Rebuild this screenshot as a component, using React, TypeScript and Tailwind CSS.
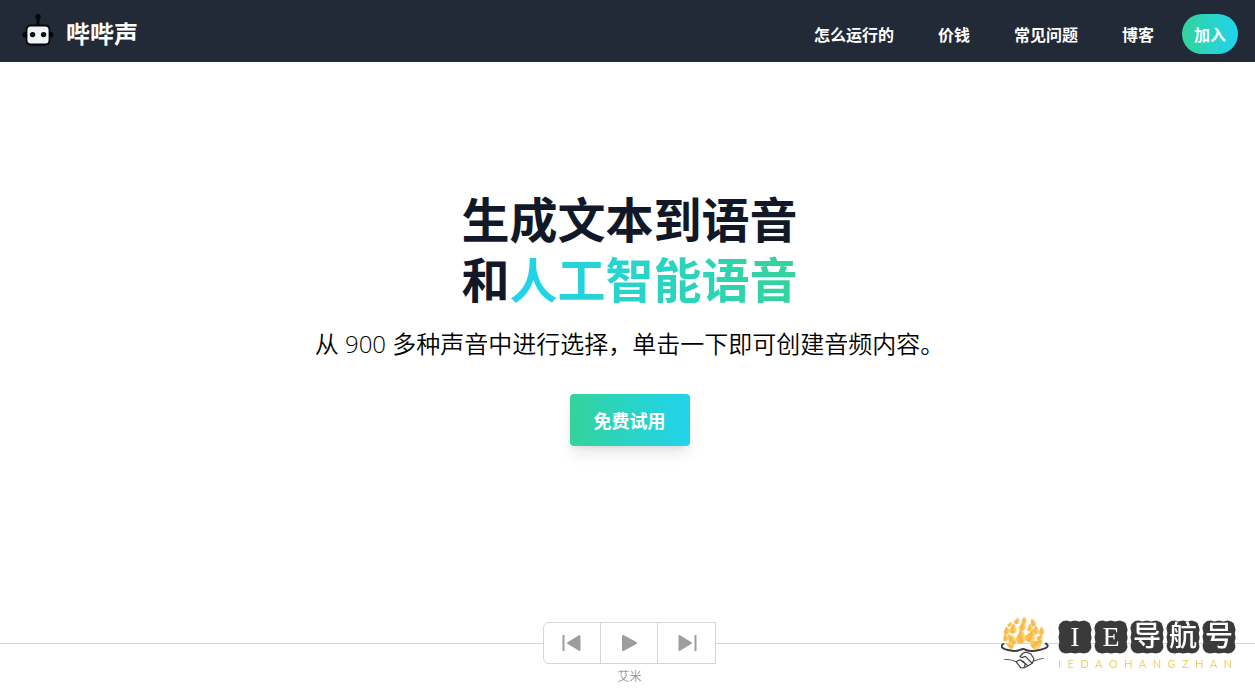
import React from "react";

const navLinks = [
  { label: "怎么运行的", href: "#how" },
  { label: "价钱", href: "#pricing" },
  { label: "常见问题", href: "#faq" },
  { label: "博客", href: "#blog" },
];

const RobotIcon: React.FC = () => (
  <svg className="h-10 w-8" viewBox="0 -1 32 40" aria-hidden="true">
    <circle cx="16" cy="1.8" r="2.8" fill="#05070d" />
    <path d="M16 2v10" stroke="#05070d" strokeWidth="2.8" />
    <rect x="0.5" y="17" width="31" height="5.5" rx="2.5" fill="#05070d" />
    <rect x="3.8" y="9.4" width="24.4" height="21.4" rx="5" fill="#05070d" />
    <rect x="5.4" y="11.6" width="21.2" height="17" rx="3.5" fill="#f1f2f4" />
    <circle cx="10.6" cy="19.6" r="2.7" fill="#05070d" />
    <circle cx="21.6" cy="19.6" r="2.7" fill="#05070d" />
  </svg>
);

const Header: React.FC = () => (
  <header className="flex items-center justify-between bg-[#212a36] pt-[14px] pr-[17px] pb-2 pl-[22px] text-white">
    <a
      href="#home"
      className="flex items-center gap-3 text-2xl leading-[38px] font-bold"
    >
      <RobotIcon />
      <span className="self-start">哔哔声</span>
    </a>
    <nav className="flex items-center gap-7 font-bold">
      <ul className="flex items-center gap-11">
        {navLinks.map((link) => (
          <li key={link.href}>
            <a href={link.href}>{link.label}</a>
          </li>
        ))}
      </ul>
      <a
        href="#join"
        className="rounded-full bg-linear-to-r from-[#34d399] to-[#22d3ee] px-3 py-2"
      >
        加入
      </a>
    </nav>
  </header>
);

const Hero: React.FC = () => (
  <section className="flex flex-col items-center pt-[130px] pb-16 pl-1 text-center">
    <h1 className="font-['Liberation_Sans','Noto_Sans_CJK_SC',sans-serif] text-5xl leading-[60px] font-bold text-[#111827]">
      生成文本到语音
      <br />和
      <span className="bg-linear-to-r from-[#22d3ee] to-[#34d399] bg-clip-text text-transparent">
        人工智能语音
      </span>
    </h1>
    <p className="mt-[14px] font-['Open_Sans','Noto_Sans_CJK_SC',sans-serif] text-2xl leading-9 font-[350] text-black">
      从 900 多种声音中进行选择，单击一下即可创建音频内容。
    </p>
    <button
      type="button"
      className="mt-8 rounded bg-linear-to-r from-[#34d399] to-[#22d3ee] px-6 py-3 text-lg font-bold text-white shadow-lg"
    >
      免费试用
    </button>
  </section>
);

const controls = [
  {
    label: "上一个",
    icon: (
      <>
        <path d="M1.5 2v16" strokeWidth="2" />
        <path d="M17.5 3v14L6 10z" strokeWidth="2" fill="currentColor" />
      </>
    ),
  },
  {
    label: "播放",
    icon: <path d="M4 3v14l13-7z" strokeWidth="2" fill="currentColor" />,
  },
  {
    label: "下一个",
    icon: (
      <>
        <path d="M2.5 3v14L14 10z" strokeWidth="2" fill="currentColor" />
        <path d="M18.5 2v16" strokeWidth="2" />
      </>
    ),
  },
];

const Player: React.FC = () => (
  <section className="mt-auto pb-[6px]">
    <div className="flex items-center">
      <div className="h-px flex-1 bg-gray-300 pl-1" />
      <div className="flex divide-x divide-gray-300 overflow-hidden rounded-l-md border border-gray-300">
        {controls.map((control) => (
          <button
            key={control.label}
            type="button"
            aria-label={control.label}
            className="flex h-10 w-[57px] items-center justify-center text-[#9d9da1]"
          >
            <svg
              className="h-5 w-5"
              viewBox="0 0 20 20"
              fill="none"
              stroke="currentColor"
              strokeLinejoin="round"
            >
              {control.icon}
            </svg>
          </button>
        ))}
      </div>
      <div className="h-px flex-1 bg-gray-300" />
    </div>
    <p className="mt-1 pl-1 text-center text-xs text-[#9d9da1]">艾米</p>
  </section>
);

const FLAME = "M2-18C12-9 15 0 12 8C8 17-8 17-12 8C-14 0-2-5 2-18z";

const flames = [
  { x: 80, y: 48, r: 10, s: 0.65 },
  { x: 102, y: 46, r: -10, s: 0.65 },
  { x: 128, y: 54, r: -25, s: 0.75 },
  { x: 59, y: 58, r: 20, s: 0.5 },
  { x: 49, y: 77, r: -10, s: 0.75 },
  { x: 68, y: 72, r: -5, s: 0.95 },
  { x: 97, y: 64, r: 5, s: 0.9 },
  { x: 119, y: 69, r: -10, s: 0.7 },
  { x: 136, y: 76, r: -5, s: 0.85 },
  { x: 154, y: 78, r: -10, s: 0.75 },
  { x: 91, y: 96, r: -10, s: 1.3 },
  { x: 121, y: 93, r: 15, s: 1.25 },
  { x: 46, y: 98, r: -20, s: 0.7 },
  { x: 149, y: 98, r: 25, s: 0.7 },
  { x: 64, y: 105, r: -40, s: 1.1 },
  { x: 139, y: 116, r: 50, s: 1.2 },
  { x: 60, y: 122, r: -70, s: 0.75 },
];

const BadgeMark: React.FC = () => (
  <svg className="h-14 w-12" viewBox="33 36 144 168" aria-hidden="true">
    <defs>
      <linearGradient id="flame" x1="0" x2="1">
        <stop offset="0" stopColor="#fad05a" />
        <stop offset="0.5" stopColor="#f8b440" />
        <stop offset="1" stopColor="#ffe59a" />
      </linearGradient>
    </defs>
    {flames.map((f) => (
      <path
        key={`${f.x}-${f.y}`}
        d={FLAME}
        fill="url(#flame)"
        transform={`translate(${f.x} ${f.y}) rotate(${f.r}) scale(${f.s})`}
      />
    ))}
    <g fill="none" stroke="#3d3d3f" strokeLinecap="round" strokeLinejoin="round">
      <path
        d="M40 117C28 124 38 133 58 136C72 140 84 138 92 134Q100 130 108 135C118 139 136 138 148 135C170 130 180 124 168 116"
        strokeWidth="6"
      />
      <path d="M44 163Q62 162 78 170M132 168Q145 162 160 160" strokeWidth="2.5" />
      <path
        d="M78 170L90 164L106 176L102 189L92 188ZM90 155Q98 143 108 141L123 147L132 162L127 175L106 187M90 155Q96 160 106 154L126 174M98 168L112 181"
        strokeWidth="3.5"
      />
    </g>
  </svg>
);

const tiles = ["I", "E", "导", "航", "号"];

const SiteBadge: React.FC = () => (
  <aside className="fixed right-[19px] bottom-[17px] flex items-center gap-[9px]">
    <BadgeMark />
    <div>
      <div className="flex gap-[2px]">
        {tiles.map((tile) => (
          <span
            key={tile}
            className="relative flex h-[34px] w-[34px] items-center justify-center"
          >
            <svg
              className="absolute inset-0 h-full w-full"
              viewBox="0 0 34 34"
              aria-hidden="true"
            >
              <path
                d="M5 1L9 .5L12 1.5L17 .4L21 1.4L26 .5L29 1.5L31.5 3L32.6 6L33.6 10L32.8 13L33.6 18L32.6 22L33.5 27L32.4 30L30 32.5L26 33.6L22 32.8L17 33.6L13 32.7L8 33.6L4 32.5L1.6 30L.5 26L1.4 22L.5 17L1.4 13L.4 8L1.6 4z"
                fill="#3a3a3c"
                strokeLinejoin="round"
              />
            </svg>
            <span className="relative font-['Liberation_Serif','Noto_Sans_CJK_SC',serif] text-[28px] leading-8 font-medium text-white">
              {tile}
            </span>
          </span>
        ))}
      </div>
      <div className="mt-1 flex justify-between pr-1 font-['Lato',sans-serif] text-[11px] leading-3 text-[#efd268]">
        {"IEDAOHANGZHAN".split("").map((letter, i) => (
          <span key={i}>{letter}</span>
        ))}
      </div>
    </div>
  </aside>
);

const App: React.FC = () => {
  return (
    <div className="flex min-h-screen flex-col bg-white font-['Noto_Sans_CJK_SC',sans-serif]">
      <Header />
      <main className="flex flex-1 flex-col">
        <Hero />
        <Player />
      </main>
      <SiteBadge />
    </div>
  );
};

export default App;
